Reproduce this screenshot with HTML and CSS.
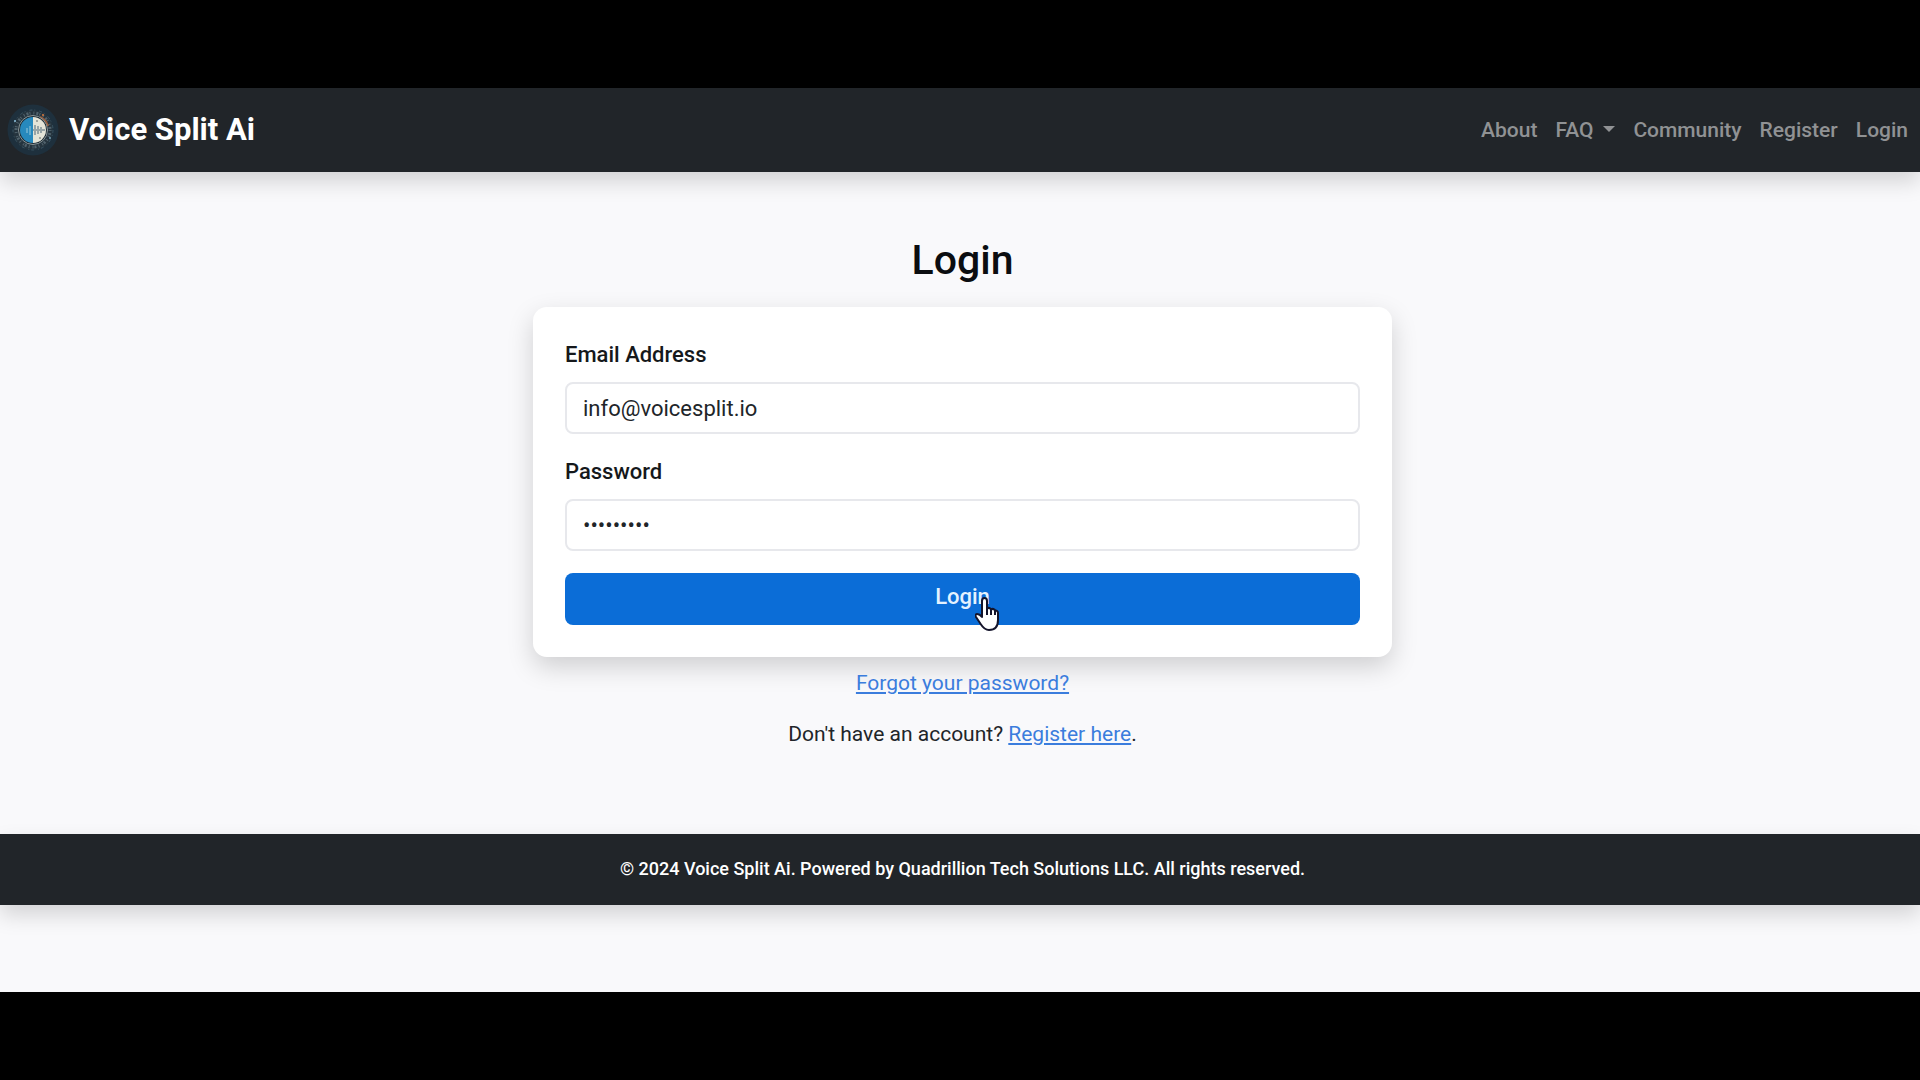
FILE: index.html
```
<!DOCTYPE html>
<html lang="en">
<head>
<meta charset="utf-8">
<meta name="viewport" content="width=device-width, initial-scale=1">
<title>Login - Voice Split Ai</title>
<link rel="stylesheet" href="styles.css">
</head>
<body>
<div class="page">
  <header class="navbar">
    <a class="brand" href="#">
      <svg class="logo" viewBox="0 0 52 52" aria-hidden="true">
        <circle cx="26" cy="26" r="25.5" fill="#1e303d"/>
        <circle cx="26" cy="26" r="20" fill="#25343e"/>
        <circle cx="26" cy="26" r="17" fill="none" stroke="#50626c" stroke-width="3" stroke-dasharray="1 2 2 1 1 3"/>
        <circle cx="26" cy="26" r="20" fill="none" stroke="#3a5463" stroke-width="1" stroke-dasharray="3 2 1 4"/>
        <path d="M33 13a15 15 0 0 1 8 9" fill="none" stroke="#9a5b38" stroke-width="2"/>
        <circle cx="36" cy="11" r="1" fill="#d9783d"/>
        <circle cx="8" cy="17" r="1" fill="#8ec0dc"/>
        <circle cx="43" cy="34" r="1" fill="#719bae"/>
        <circle cx="26" cy="26" r="14.5" fill="#1d2a33" stroke="#8b9799"/>
        <path d="M26 13a13 13 0 0 0 0 26z" fill="#2789bd"/>
        <path d="M26 13a13 13 0 0 1 0 26z" fill="#e4e4d7"/>
        <path d="M20 24v5M23 22v9" stroke="#5fa9cc" stroke-width="2"/>
        <path d="M28 21v10M31 22v8M34 23v6M26 26h12" stroke="#98a5a7" stroke-width="2"/>
        <path d="M29 17h2M32 34h2" stroke="#5c6668"/>
      </svg>
      <span>Voice Split Ai</span>
    </a>
    <nav class="links">
      <a href="#">About</a>
      <a class="dropdown" href="#">FAQ</a>
      <a href="#">Community</a>
      <a href="#">Register</a>
      <a href="#">Login</a>
    </nav>
  </header>
  <main class="content">
    <h1>Login</h1>
    <form class="card">
      <label for="email">Email Address</label>
      <input id="email" type="email" value="info@voicesplit.io">
      <label for="password">Password</label>
      <input id="password" type="password" value="voice1234">
      <button type="button">Login
        <svg class="pointer" viewBox="0 0 24 34" aria-hidden="true">
          <path d="M7 20V4c0-4 5-4 5 0v8c1-2 4-1 4 1 1-2 4-1 4 1 1-1 3 0 3 2v7c0 6-3 10-9 10-5 0-7-4-9-7L1 20c-2-4 3-4 6 0z" fill="#fff" stroke="#14142b" stroke-width="2" stroke-linejoin="round"/>
          <path d="M12 11v7M16 13v5M20 14v4" stroke="#14142b" stroke-width="2"/>
        </svg>
      </button>
    </form>
    <p class="forgot"><a href="#">Forgot your password?</a></p>
    <p>Don't have an account? <a href="#">Register here</a>.</p>
  </main>
  <footer class="footer">© 2024 Voice Split Ai. Powered by Quadrillion Tech Solutions LLC. All rights reserved.</footer>
</div>
</body>
</html>
```
FILE: styles.css
```
* { box-sizing: border-box; }

body {
  margin: 0;
  min-height: 100vh;
  padding: 88px 0;
  display: flex;
  background: #000;
  color: #212529;
  font: 400 21px/32px Roboto, sans-serif;
}

.page {
  flex: 1;
  min-width: 0;
  overflow: hidden;
  background: #f9f9fb;
}

.navbar {
  display: flex;
  align-items: center;
  justify-content: space-between;
  padding: 16px 12px 16px 7px;
  background: #212529;
  box-shadow: 0 10px 20px rgba(0, 0, 0, 0.15);
}

.brand {
  display: flex;
  align-items: center;
  gap: 10px;
  color: #fff;
  font-size: 31px;
  font-weight: 700;
  text-decoration: none;
}

.logo { width: 52px; height: 52px; }

.links { display: flex; gap: 18px; }

.links a {
  color: #909294;
  font-weight: 500;
  text-decoration: none;
}

.dropdown::after {
  content: "";
  display: inline-block;
  margin-left: 10px;
  vertical-align: 5px;
  border: 6px solid transparent;
  border-top-color: currentColor;
  border-bottom: 0;
}

.content {
  display: flex;
  flex-direction: column;
  align-items: center;
  padding: 62px 0 84px 5px;
}

h1 {
  margin: 0 0 21px;
  font-size: 41px;
  font-weight: 500;
  line-height: 52px;
  color: #0b0d10;
}

.card {
  display: flex;
  flex-direction: column;
  width: 100%;
  max-width: 859px;
  padding: 32px;
  border-radius: 14px;
  background: #fff;
  box-shadow: 0 10px 26px rgba(0, 0, 0, 0.17);
}

.card label {
  margin-bottom: 11px;
  color: #15181b;
  font-size: 22px;
  font-weight: 500;
}

.card input {
  height: 52px;
  margin-bottom: 22px;
  padding: 0 16px;
  border: 2px solid #e7e8ec;
  border-radius: 8px;
  background: #fff;
  color: #212529;
  font: inherit;
  font-size: 22px;
}

.card button {
  position: relative;
  height: 52px;
  padding: 0 0 4px;
  border: 0;
  border-radius: 8px;
  background: #0b6dd7;
  color: #e4f2ff;
  font: inherit;
  font-size: 22px;
  font-weight: 500;
}

/* hand cursor over the button label */
.pointer {
  position: absolute;
  left: calc(50% + 12px);
  top: 24px;
  width: 24px;
  height: 34px;
}

p { margin: 0; }

.forgot { margin: 10px 0 19px; }

p a { color: #3b7ddd; text-underline-offset: 2px; }

.footer {
  padding: 19px 0 20px 5px;
  background: #212529;
  box-shadow: 0 10px 20px rgba(0, 0, 0, 0.15);
  color: #fff;
  font-size: 18px;
  font-weight: 500;
  text-align: center;
}
```
